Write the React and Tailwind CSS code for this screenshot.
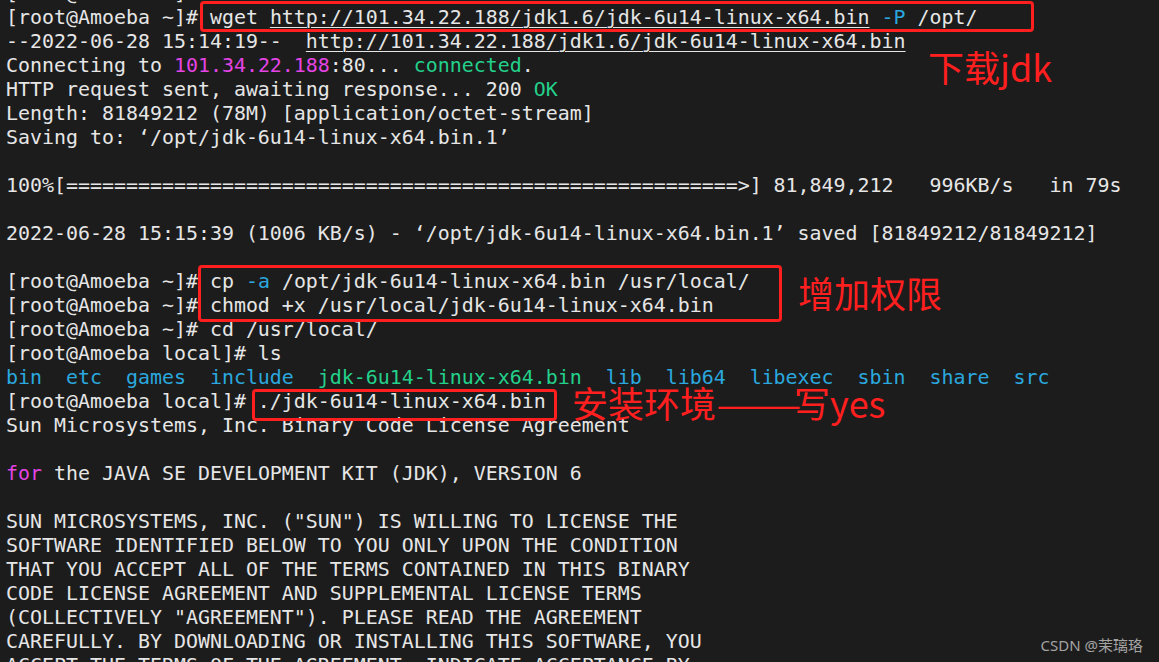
const W = 'text-[#e6e6e6]';
const MAG = 'text-[#e444e4]';
const GRN = 'text-[#23d18b]';
const BLU = 'text-[#2aa8df]';
const URL = 'underline underline-offset-[3px] decoration-1';

const bar = '='.repeat(56) + '>';

// each line: list of [text, className]
const lines = [
  [['[root@Amoeba ~]# ', W]],
  [['[root@Amoeba ~]# wget ', W], ['http://101.34.22.188/jdk1.6/jdk-6u14-linux-x64.bin', `${W} ${URL}`], [' ', W], ['-P', BLU], [' /opt/', W]],
  [['--2022-06-28 15:14:19--  ', W], ['http://101.34.22.188/jdk1.6/jdk-6u14-linux-x64.bin', `${W} ${URL}`]],
  [['Connecting to ', W], ['101.34.22.188', MAG], [':80... ', W], ['connected', GRN], ['.', W]],
  [['HTTP request sent, awaiting response... 200 ', W], ['OK', GRN]],
  [['Length: 81849212 (78M) [application/octet-stream]', W]],
  [['Saving to: \u2018/opt/jdk-6u14-linux-x64.bin.1\u2019', W]],
  [],
  [[`100%[${bar}] 81,849,212   996KB/s   in 79s`, W]],
  [],
  [['2022-06-28 15:15:39 (1006 KB/s) - \u2018/opt/jdk-6u14-linux-x64.bin.1\u2019 saved [81849212/81849212]', W]],
  [],
  [['[root@Amoeba ~]# cp ', W], ['-a', BLU], [' /opt/jdk-6u14-linux-x64.bin /usr/local/', W]],
  [['[root@Amoeba ~]# chmod +x /usr/local/jdk-6u14-linux-x64.bin', W]],
  [['[root@Amoeba ~]# cd /usr/local/', W]],
  [['[root@Amoeba local]# ls', W]],
  [['bin  etc  games  include  ', BLU], ['jdk-6u14-linux-x64.bin', GRN], ['  lib  lib64  libexec  sbin  share  src', BLU]],
  [['[root@Amoeba local]# ./jdk-6u14-linux-x64.bin', W]],
  [['Sun Microsystems, Inc. Binary Code License Agreement', W]],
  [],
  [['for', MAG], [' the JAVA SE DEVELOPMENT KIT (JDK), VERSION 6', W]],
  [],
  [['SUN MICROSYSTEMS, INC. ("SUN") IS WILLING TO LICENSE THE', W]],
  [['SOFTWARE IDENTIFIED BELOW TO YOU ONLY UPON THE CONDITION', W]],
  [['THAT YOU ACCEPT ALL OF THE TERMS CONTAINED IN THIS BINARY', W]],
  [['CODE LICENSE AGREEMENT AND SUPPLEMENTAL LICENSE TERMS', W]],
  [['(COLLECTIVELY "AGREEMENT"). PLEASE READ THE AGREEMENT', W]],
  [['CAREFULLY. BY DOWNLOADING OR INSTALLING THIS SOFTWARE, YOU', W]],
  [['ACCEPT THE TERMS OF THE AGREEMENT. INDICATE ACCEPTANCE BY', W]],
];

const note = "font-['Noto_Sans_CJK_SC','Noto_Sans',sans-serif] text-[36px] leading-none text-[#ff1f1f] whitespace-nowrap";

export default function App() {
  return (
    <div className="relative h-[662px] w-[1159px] overflow-hidden bg-[#1c1c1c]">
      <div className="-mt-[18px] pl-[6px] font-['DejaVu_Sans_Mono',monospace] text-[19.93px] leading-[24px]">
        {lines.map((segs, i) => (
          <div key={i} className="h-[24px] whitespace-pre">
            {segs.map(([t, c], j) => (
              <span key={j} className={c}>{t}</span>
            ))}
          </div>
        ))}
      </div>

      {/* red annotation boxes */}
      <div className="absolute left-[200px] top-[1px] h-[31px] w-[834px] rounded-[4px] border-[3px] border-[#ff1f1f]" />
      <div className="absolute left-[198px] top-[265px] h-[57px] w-[584px] rounded-[4px] border-[3px] border-[#ff1f1f]" />
      <div className="absolute left-[252px] top-[389px] h-[32px] w-[305px] rounded-[4px] border-[3px] border-[#ff1f1f]" />

      <div className={`absolute left-[928px] top-[48px] ${note}`}>下载jdk</div>
      <div className={`absolute left-[798px] top-[274px] ${note}`}>增加权限</div>
      <div className={`absolute left-[572px] top-[384px] flex items-baseline ${note}`}>
        <span>安装环境</span>
        <span className="inline-block w-[78px] origin-left scale-x-[1.42]">——</span>
        <span>写yes</span>
      </div>

      <div className="absolute right-[16px] bottom-[9px] font-['Noto_Sans','Noto_Sans_CJK_SC',sans-serif] text-[15px] leading-none text-[#a3a3a3]">
        CSDN @茉璃珞
      </div>
    </div>
  );
}
